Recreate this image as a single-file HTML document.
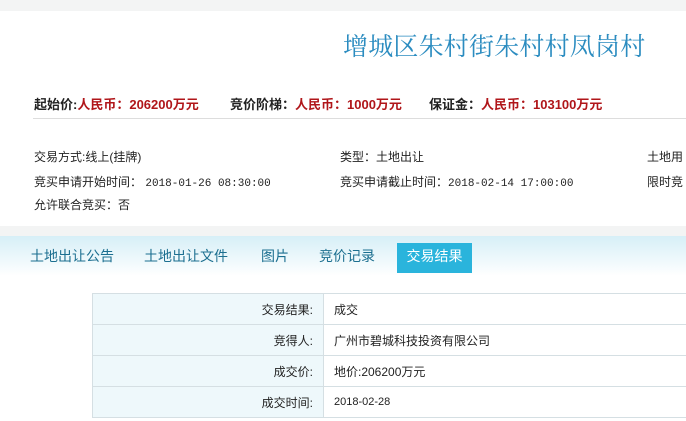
<!DOCTYPE html>
<html><head><meta charset="utf-8"><style>
body{margin:0;width:686px;height:421px;overflow:hidden;background:#fff;font-family:"Liberation Sans","Noto Sans CJK SC",sans-serif;position:relative}
.a{position:absolute;white-space:nowrap}
.t{font-size:12px;color:#222}
.m{font-family:"Liberation Mono",monospace;font-size:11px}
.r{color:#b0161a}
td{border:1px solid #d5dfe3;height:30px;font-size:12px;color:#222;padding:0 10px}
</style></head><body>
<div class="a" style="left:0;top:0;width:686px;height:11px;background:#f3f4f4"></div>
<div class="a" style="left:343px;top:27px;font-size:25px;color:#2b8cc0;font-family:'Noto Serif CJK SC',serif;letter-spacing:0.2px">增城区朱村街朱村村凤岗村</div>
<div class="a" style="left:34px;top:94px;font-size:13px;font-weight:bold;color:#222">起始价:<span class="r">人民币：206200万元</span></div>
<div class="a" style="left:230px;top:94px;font-size:13px;font-weight:bold;color:#222">竞价阶梯：<span class="r">人民币：1000万元</span></div>
<div class="a" style="left:429px;top:94px;font-size:13px;font-weight:bold;color:#222">保证金：<span class="r">人民币：103100万元</span></div>
<div class="a" style="left:33px;top:118px;width:653px;height:1px;background:#ddd"></div>
<div class="a t" style="left:34px;top:148px">交易方式:线上(挂牌)</div>
<div class="a t" style="left:340px;top:148px">类型：土地出让</div>
<div class="a t" style="left:647px;top:148px">土地用</div>
<div class="a t" style="left:34px;top:173px">竞买申请开始时间： <span class="m">2018-01-26 08:30:00</span></div>
<div class="a t" style="left:340px;top:173px">竞买申请截止时间：<span class="m">2018-02-14 17:00:00</span></div>
<div class="a t" style="left:647px;top:173px">限时竞</div>
<div class="a t" style="left:34px;top:196px">允许联合竞买：否</div>
<div class="a" style="left:0;top:226px;width:686px;height:10px;background:#f3f4f4"></div>
<div class="a" style="left:0;top:236px;width:686px;height:40px;background:linear-gradient(#d6eff7,#fff)"></div>
<div class="a" style="left:30px;top:246px;font-size:14px;color:#1c6f90">土地出让公告</div>
<div class="a" style="left:144px;top:246px;font-size:14px;color:#1c6f90">土地出让文件</div>
<div class="a" style="left:261px;top:246px;font-size:14px;color:#1c6f90">图片</div>
<div class="a" style="left:319px;top:246px;font-size:14px;color:#1c6f90">竞价记录</div>
<div class="a" style="left:397px;top:243px;width:75px;height:30px;background:#2ab4dc;color:#fff;font-size:14px;text-align:center;line-height:26px">交易结果</div>
<table class="a" style="left:92px;top:293px;width:600px;border-collapse:collapse">
<tr><td style="width:210px;background:#eef8fb;text-align:right">交易结果:</td><td>成交</td></tr>
<tr><td style="background:#eef8fb;text-align:right">竞得人:</td><td>广州市碧城科技投资有限公司</td></tr>
<tr><td style="background:#eef8fb;text-align:right">成交价:</td><td>地价:206200万元</td></tr>
<tr><td style="background:#eef8fb;text-align:right">成交时间:</td><td style="font-size:11px">2018-02-28</td></tr>
</table>
</body></html>
